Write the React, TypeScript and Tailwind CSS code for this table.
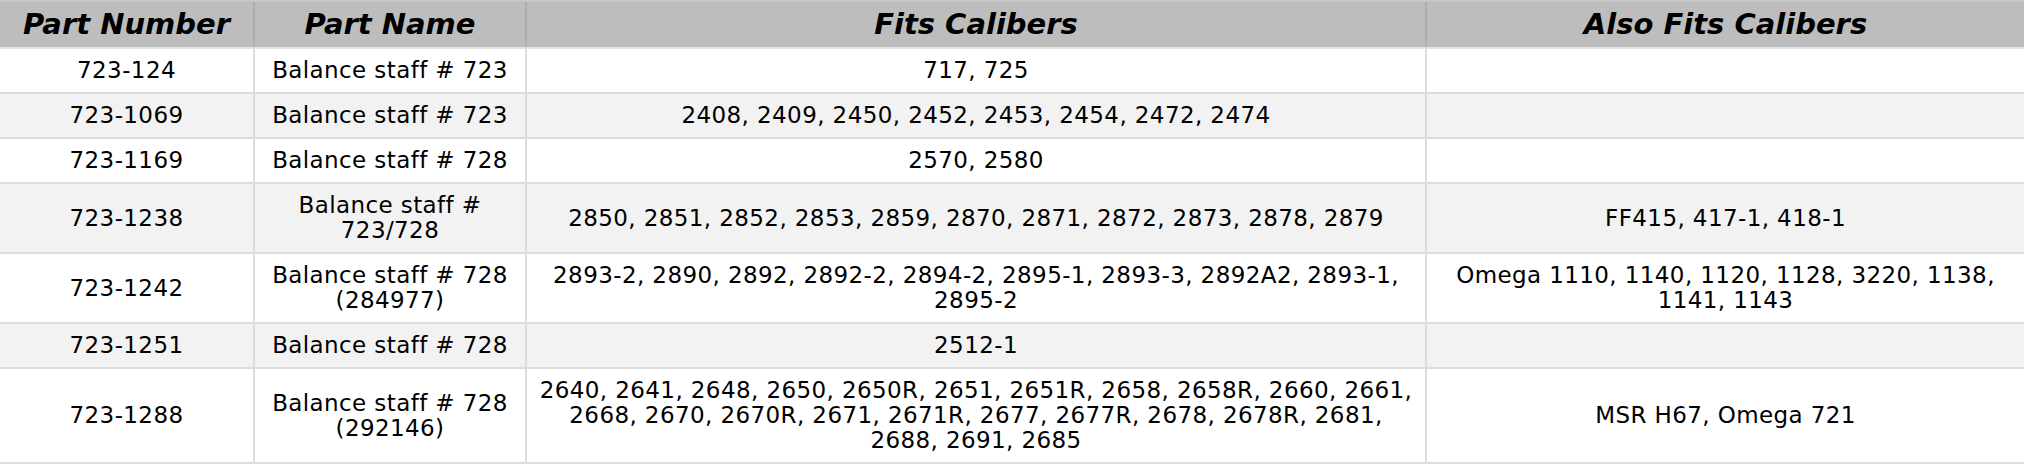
const rows = [
  { part: "723-124", name: "Balance staff # 723", fits: "717, 725", also: "" },
  { part: "723-1069", name: "Balance staff # 723", fits: "2408, 2409, 2450, 2452, 2453, 2454, 2472, 2474", also: "" },
  { part: "723-1169", name: "Balance staff # 728", fits: "2570, 2580", also: "" },
  {
    part: "723-1238",
    name: "Balance staff # 723/728",
    fits: "2850, 2851, 2852, 2853, 2859, 2870, 2871, 2872, 2873, 2878, 2879",
    also: "FF415, 417-1, 418-1",
  },
  {
    part: "723-1242",
    name: "Balance staff # 728 (284977)",
    fits: "2893-2, 2890, 2892, 2892-2, 2894-2, 2895-1, 2893-3, 2892A2, 2893-1, 2895-2",
    also: "Omega 1110, 1140, 1120, 1128, 3220, 1138, 1141, 1143",
  },
  { part: "723-1251", name: "Balance staff # 728", fits: "2512-1", also: "" },
  {
    part: "723-1288",
    name: "Balance staff # 728 (292146)",
    fits: "2640, 2641, 2648, 2650, 2650R, 2651, 2651R, 2658, 2658R, 2660, 2661, 2668, 2670, 2670R, 2671, 2671R, 2677, 2677R, 2678, 2678R, 2681, 2688, 2691, 2685",
    also: "MSR H67, Omega 721",
  },
];

const headers = ["Part Number", "Part Name", "Fits Calibers", "Also Fits Calibers"];

export default function App() {
  return (
    <div className="w-[2024px] h-[464px] overflow-hidden bg-white font-['DejaVu_Sans',Verdana,sans-serif] text-black">
      <table className="w-[2024px] table-fixed border-collapse">
        <colgroup>
          <col className="w-[254px]" />
          <col className="w-[272px]" />
          <col className="w-[900px]" />
          <col className="w-[598px]" />
        </colgroup>
        <thead>
          <tr>
            {headers.map((h, i) => (
              <th
                key={h}
                className={`border-t-2 border-b-2 border-t-[#c6c6c6] border-b-[#e2e2e2] bg-[#bdbdbd] px-2 py-[5px] text-center text-[29px] leading-[35px] font-bold italic ${
                  i > 0 ? "border-l-2 border-l-[#acacac]" : ""
                }`}
              >
                {h}
              </th>
            ))}
          </tr>
        </thead>
        <tbody>
          {rows.map((r, idx) => (
            <tr key={r.part} className={idx % 2 === 1 ? "bg-[#f2f2f2]" : "bg-white"}>
              {[r.part, r.name, r.fits, r.also].map((v, i) => (
                <td
                  key={i}
                  className={`border-b-2 border-[#dcdcdc] px-2 py-[9px] text-center align-middle text-[23px] leading-[25px] tracking-[0.4px] ${
                    i > 0 ? "border-l-2" : ""
                  }`}
                >
                  {v}
                </td>
              ))}
            </tr>
          ))}
        </tbody>
      </table>
    </div>
  );
}
